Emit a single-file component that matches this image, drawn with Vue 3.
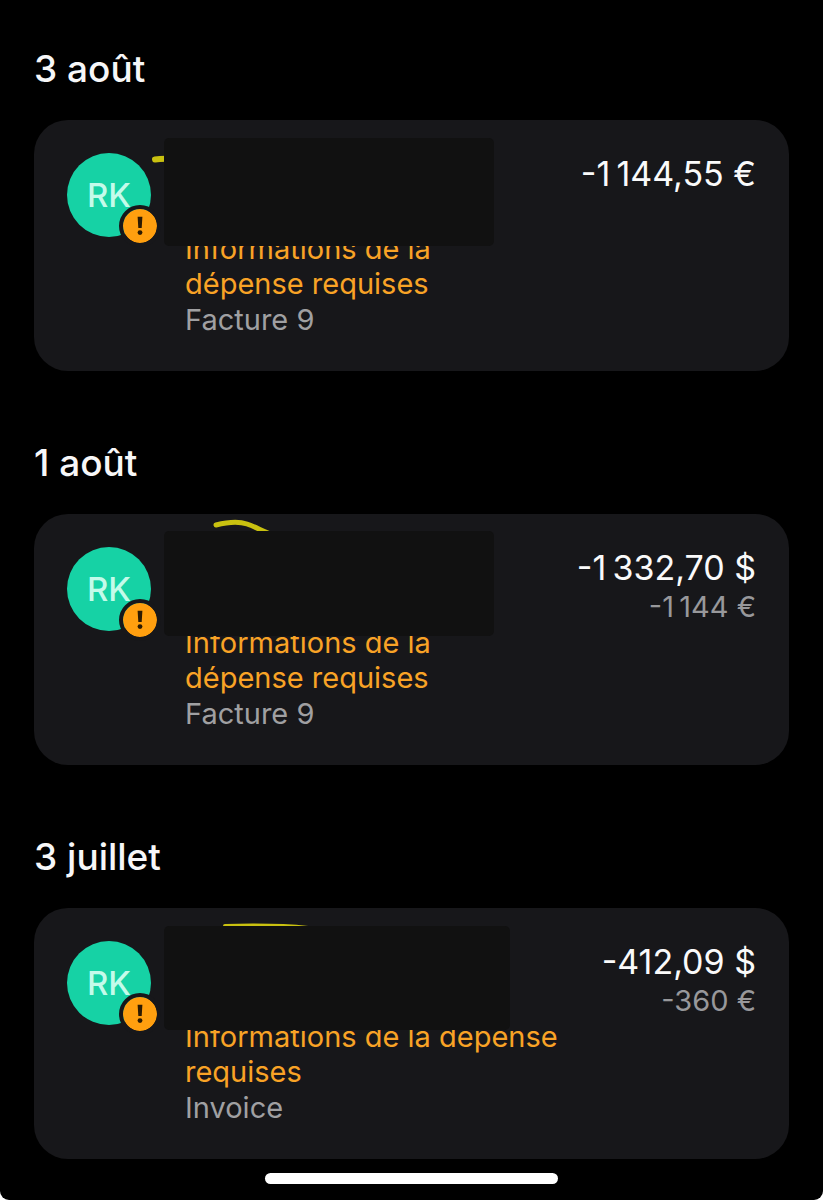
<script setup>
import { ref } from 'vue'

const groups = ref([
  {
    id: 1,
    date: '3 août',
    initials: 'RK',
    status: 'Informations de la dépense requises',
    label: 'Facture 9',
    amount: '-1\u202f144,55 €',
    converted: '',
    mask: 'mask-first',
    stroke: 'M121 39.5 C124 39 130 38.5 140 39',
    strokeWidth: 6
  },
  {
    id: 2,
    date: '1 août',
    initials: 'RK',
    status: 'Informations de la dépense requises',
    label: 'Facture 9',
    amount: '-1\u202f332,70 $',
    converted: '-1\u202f144 €',
    mask: 'mask-second',
    stroke: 'M182 11 C194 8 204 7 213 10 C222 13 230 18 242 22',
    strokeWidth: 5
  },
  {
    id: 3,
    date: '3 juillet',
    initials: 'RK',
    status: 'Informations de la dépense requises',
    label: 'Invoice',
    amount: '-412,09 $',
    converted: '-360 €',
    mask: 'mask-third',
    stroke: 'M191 18 C210 17.5 250 17.5 274 20',
    strokeWidth: 4
  }
])
</script>

<template>
  <div class="screen">
    <main class="transactions">
      <section v-for="group in groups" :key="group.id" class="group">
        <h2 class="group-date">{{ group.date }}</h2>
        <article class="card">
          <div class="avatar">
            <span class="initials">{{ group.initials }}</span>
            <span class="badge">
              <svg viewBox="0 0 34 34" aria-hidden="true">
                <path d="M14.6 7.8h4.8l-.7 11.2h-3.4z" />
                <circle cx="17" cy="23.6" r="2.4" />
              </svg>
            </span>
          </div>
          <div class="details">
            <p class="status">{{ group.status }}</p>
            <p class="label">{{ group.label }}</p>
          </div>
          <div class="amounts">
            <p class="amount">{{ group.amount }}</p>
            <p v-if="group.converted" class="converted">{{ group.converted }}</p>
          </div>
          <svg class="marker" width="300" height="60" viewBox="0 0 300 60" aria-hidden="true">
            <path :d="group.stroke" :stroke-width="group.strokeWidth" />
          </svg>
          <div :class="['mask', group.mask]"></div>
        </article>
      </section>
    </main>
    <div class="home-indicator"></div>
  </div>
</template>

<style>
body {
  margin: 0;
  background-color: #ffffff;
}
</style>

<style scoped>
.screen {
  box-sizing: border-box;
  min-height: 100vh;
  padding: 46px 34px 16px;
  background-color: #000000;
  border-radius: 0 0 9px 9px;
  font-family: Inter, "Liberation Sans", sans-serif;
  display: flex;
  flex-direction: column;
}

.transactions {
  display: flex;
  flex-direction: column;
  gap: 69px;
}

.group {
  display: flex;
  flex-direction: column;
  gap: 28px;
}

.group-date {
  margin: 0;
  font-size: 37px;
  font-weight: 500;
  line-height: 46px;
  color: #f7f7f8;
}

.card {
  position: relative;
  display: flex;
  align-items: flex-start;
  gap: 34px;
  padding: 33px;
  background-color: #17171a;
  border-radius: 34px;
}

.avatar {
  position: relative;
  width: 84px;
  height: 84px;
  flex-shrink: 0;
  border-radius: 50%;
  background-color: #16d2a5;
  display: flex;
  align-items: center;
  justify-content: center;
}

.initials {
  font-size: 33px;
  font-weight: 500;
  color: #c4fbea;
}

.badge {
  position: absolute;
  right: -10px;
  bottom: -10px;
  width: 34px;
  height: 34px;
  border: 4px solid #17171a;
  border-radius: 50%;
  background-color: #ff9f0f;
  background-clip: padding-box;
}

.badge svg {
  display: block;
  fill: #2b1a02;
}

.details {
  flex: 1;
  min-width: 0;
  padding-top: 78px;
}

.status,
.label,
.amount,
.converted {
  margin: 0;
}

.status {
  font-size: 29px;
  line-height: 35px;
  color: #f9a326;
}

.label {
  margin-top: 1px;
  font-size: 29px;
  line-height: 36px;
  color: #a0a0a2;
}

.amounts {
  flex-shrink: 0;
  text-align: right;
  white-space: nowrap;
}

.amount {
  font-size: 34px;
  line-height: 42px;
  color: #fafafa;
}

.converted {
  font-size: 29px;
  line-height: 36px;
  color: #98989b;
}

.marker {
  position: absolute;
  top: 0;
  left: 0;
  fill: none;
  stroke: #c9c110;
  stroke-linecap: round;
}

.mask {
  position: absolute;
  left: 130px;
  background-color: #111111;
  border-radius: 5px;
}

.mask-first {
  top: 18px;
  width: 330px;
  height: 108px;
}

.mask-second {
  top: 17px;
  width: 330px;
  height: 105px;
}

.mask-third {
  top: 18px;
  width: 346px;
  height: 104px;
}

.home-indicator {
  width: 293px;
  height: 11px;
  margin: 14px auto 0;
  border-radius: 6px;
  background-color: #ffffff;
}
</style>
